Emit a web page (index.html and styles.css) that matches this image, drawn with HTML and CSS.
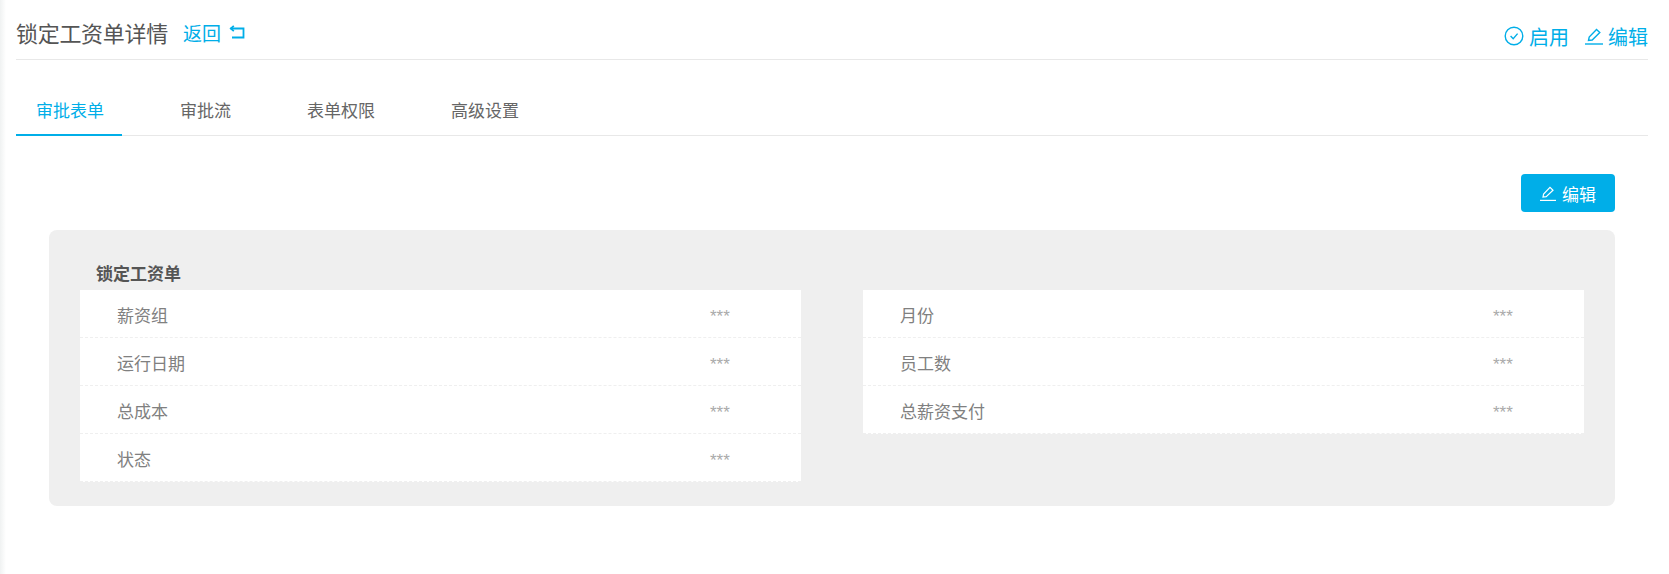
FILE: index.html
```html
<!DOCTYPE html>
<html>
<head>
    <title>锁定工资单详情</title>
    <meta http-equiv="Content-Type" content="text/html; charset=UTF-8">
    <link rel="stylesheet" href="styles.css">
</head>
<body>
    <div class="page">
        <header class="top-bar">
            <div class="top-left">
                <h1>锁定工资单详情</h1>
                <a class="back-link" href="#">返回
                    <svg class="icon-back" viewBox="0 0 16 14" width="16" height="14" fill="none" stroke="currentColor" stroke-width="1.8"><path d="M1.5 3.5H14.5V12.5H3"/><path d="M4.8 0.8L1.8 3.5L4.8 6.2" /></svg>
                </a>
            </div>
            <div class="top-actions">
                <a href="#">
                    <svg viewBox="0 0 20 20" width="20" height="20" fill="none" stroke="currentColor" stroke-width="1.4"><circle cx="10" cy="10" r="8.8"/><path d="M6.6 10L9.2 12.8L13.6 7.6"/></svg>
                    启用
                </a>
                <a href="#">
                    <svg viewBox="0 0 18 18" width="18" height="18" fill="none" stroke="currentColor" stroke-width="1.4"><path d="M0 17H18"/><path d="M3.5 13.5L4.2 10L11.5 2.5L14.8 5.6L7.2 13Z"/></svg>
                    编辑
                </a>
            </div>
        </header>

        <nav class="tabs">
            <a class="tab active" href="#">审批表单</a>
            <a class="tab" href="#">审批流</a>
            <a class="tab" href="#">表单权限</a>
            <a class="tab" href="#">高级设置</a>
        </nav>

        <main class="content">
            <div class="toolbar">
                <button class="btn-edit">
                    <svg viewBox="0 0 16 16" width="16" height="16" fill="none" stroke="currentColor" stroke-width="1.2"><path d="M0 15.4H16"/><path d="M3 12L3.6 9L10 2.4L13 5.2L6.2 11.6Z"/></svg>
                    编辑
                </button>
            </div>
            <section class="form-card">
                <h2>锁定工资单</h2>
                <div class="columns">
                    <div class="column">
                        <div class="row"><span class="label">薪资组</span><span class="value">***</span></div>
                        <div class="row"><span class="label">运行日期</span><span class="value">***</span></div>
                        <div class="row"><span class="label">总成本</span><span class="value">***</span></div>
                        <div class="row"><span class="label">状态</span><span class="value">***</span></div>
                    </div>
                    <div class="column">
                        <div class="row"><span class="label">月份</span><span class="value">***</span></div>
                        <div class="row"><span class="label">员工数</span><span class="value">***</span></div>
                        <div class="row"><span class="label">总薪资支付</span><span class="value">***</span></div>
                    </div>
                </div>
            </section>
        </main>
    </div>
</body>
</html>
```

FILE: styles.css
```css
html, body {
    height: 100%;
}
body {
    margin: 0;
    background: #fff;
    color: #666;
    font-family: "Liberation Sans", "Noto Sans CJK SC", sans-serif;
    overflow: hidden;
}
a {
    color: #00aee8;
    text-decoration: none;
}
.page {
    height: 100%;
    box-sizing: border-box;
    padding: 0 21px 0 16px;
    background: linear-gradient(to right, #f0f2f2 0, #fff 6px);
}

.top-bar {
    display: flex;
    justify-content: space-between;
    height: 59px;
    border-bottom: 1px solid #e8e8e8;
}
.top-left {
    display: flex;
    align-items: center;
    height: 64px;
}
h1 {
    margin: 0;
    font-size: 22px;
    font-weight: normal;
    letter-spacing: -0.3px;
    color: #555;
}
.back-link {
    display: flex;
    align-items: center;
    margin-left: 15px;
    font-size: 19px;
}
.icon-back {
    margin-left: 8px;
}
.top-actions {
    display: flex;
    align-items: center;
    gap: 16px;
    height: 72px;
    font-size: 20px;
}
.top-actions a {
    display: flex;
    align-items: center;
    gap: 5px;
}

.tabs {
    display: flex;
    height: 75px;
    align-items: flex-end;
    border-bottom: 1px solid #e8e8e8;
}
.tab {
    box-sizing: border-box;
    height: 45px;
    margin-bottom: -1px;
    padding: 0 18px 0 20px;
    line-height: 42px;
    font-size: 17px;
    color: #666;
    margin-right: 38px;
}
.tab.active {
    color: #00aee8;
    border-bottom: 2px solid #00aee8;
}

.content {
    padding: 38px 33px 0;
}
.toolbar {
    display: flex;
    justify-content: flex-end;
}
.btn-edit {
    display: flex;
    align-items: center;
    justify-content: center;
    gap: 6px;
    width: 94px;
    height: 38px;
    border: none;
    border-radius: 4px;
    background: #00aee8;
    color: #fff;
    font-family: inherit;
    font-size: 17px;
}

.form-card {
    margin-top: 18px;
    height: 276px;
    box-sizing: border-box;
    padding: 31px 31px 0;
    border-radius: 8px;
    background: #efefef;
}
h2 {
    margin: 0;
    height: 29px;
    padding-left: 16px;
    font-size: 17px;
    line-height: 27px;
    color: #555;
}
.columns {
    display: flex;
    gap: 62px;
    align-items: flex-start;
}
.column {
    flex: 1;
    background: #fff;
}
.row {
    display: flex;
    height: 48px;
    box-sizing: border-box;
    align-items: center;
    padding-top: 2px;
    padding-left: 37px;
    border-bottom: 1px dashed #efefef;
    font-size: 17px;
}
.label {
    width: 593px;
    color: #808080;
}
.value {
    padding-top: 4px;
    color: #aaa;
    font-size: 17px;
}
```
